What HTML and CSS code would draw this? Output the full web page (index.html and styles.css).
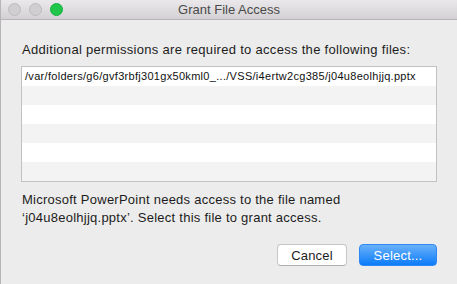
FILE: index.html
```html
<!DOCTYPE html>
<html lang="en">
<head>
    <meta charset="UTF-8">
    <meta name="viewport" content="width=device-width, initial-scale=1.0">
    <title>Grant File Access</title>
    <link rel="stylesheet" href="styles.css">
</head>
<body>
    <div class="window">
        <div class="titlebar">
            <div class="lights">
                <span class="light"></span>
                <span class="light"></span>
                <span class="light green"></span>
            </div>
            <div class="title">Grant File Access</div>
        </div>
        <div class="content">
            <p class="intro">Additional permissions are required to access the following files:</p>
            <div class="file-list">
                <div class="row">/var/folders/g6/gvf3rbfj301gx50kml0_.../VSS/i4ertw2cg385/j04u8eolhjjq.pptx</div>
                <div class="row"></div>
                <div class="row"></div>
                <div class="row"></div>
                <div class="row"></div>
                <div class="row"></div>
            </div>
            <p class="message">Microsoft PowerPoint needs access to the file named<br>‘j04u8eolhjjq.pptx’. Select this file to grant access.</p>
            <div class="button-group">
                <button type="button" class="button">Cancel</button>
                <button type="button" class="button primary">Select...</button>
            </div>
        </div>
    </div>
</body>
</html>
```

FILE: styles.css
```css
body {
    margin: 0;
    padding: 0;
    font-family: 'Liberation Sans', Arial, sans-serif;
    font-size: 13px;
    color: #1c1c1c;
    background: #ececec;
}
.window {
    width: 457px;
    height: 284px;
    box-sizing: border-box;
    border-left: 1px solid #b5b5b5;
    background: #ececec;
    display: flex;
    flex-direction: column;
}
.titlebar {
    height: 19px;
    border-bottom: 1px solid #b7b5b7;
    background: linear-gradient(#eae8ea, #d3d1d3);
    display: flex;
    align-items: center;
    position: relative;
}
.lights {
    display: flex;
    gap: 8px;
    padding-left: 7px;
    margin-top: -1px;
}
.light {
    width: 11px;
    height: 11px;
    border-radius: 50%;
    background: #d0ced0;
    border: 0.5px solid #bdbbbd;
}
.light.green {
    background: #1fc64a;
    border-color: #17b13f;
}
.title {
    position: absolute;
    left: 0;
    right: 0;
    top: 0;
    line-height: 19px;
    text-align: center;
    color: #4a4a4a;
    font-size: 13px;
}
.content {
    padding: 0 20px 0 20px;
}
.intro {
    margin: 21px 0 0 1px;
    line-height: 17px;
    letter-spacing: 0.3px;
    white-space: nowrap;
}
.file-list {
    margin-top: 8px;
    border: 1px solid #c2c2c2;
    background: #fff;
}
.row {
    height: 19px;
    line-height: 19px;
    padding-left: 3px;
    font-size: 11px;
    letter-spacing: 0.3px;
    color: #111;
    white-space: nowrap;
    overflow: hidden;
}
.row:nth-child(even) {
    background: #f3f3f3;
}
.message {
    margin: 9px 0 0 1px;
    line-height: 18px;
    letter-spacing: 0.25px;
}
.button-group {
    display: flex;
    justify-content: flex-end;
    gap: 12px;
    margin-top: 17px;
}
.button {
    font-family: 'Liberation Sans', Arial, sans-serif;
    font-size: 13px;
    letter-spacing: 0.2px;
    height: 22px;
    width: 70px;
    padding: 0;
    border: 1px solid #c6c6c6;
    border-bottom-color: #b0b0b0;
    border-radius: 4px;
    background: #fff;
    color: #1c1c1c;
}
.button.primary {
    width: 78px;
    border: 1px solid #2f86f5;
    background: linear-gradient(#69b1fa, #0c7cf9);
    color: #fff;
}
```
